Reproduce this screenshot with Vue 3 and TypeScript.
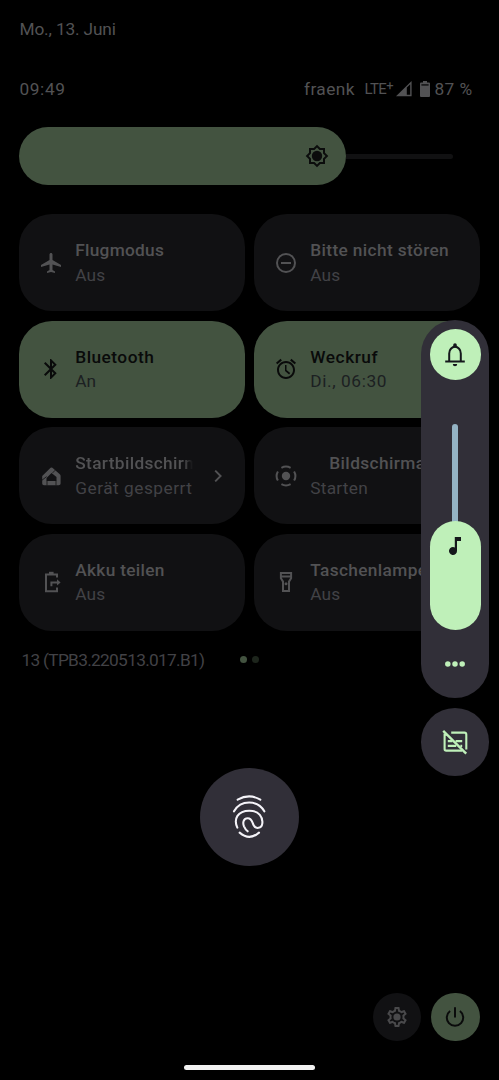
<script setup lang="ts">
interface Tile {
  icon: string
  title: string
  state: string
  active?: boolean
  chevron?: boolean
  indent?: boolean
  titleSpacing: number
  stateSpacing: number
}

const tiles: Tile[] = [
  { icon: 'plane', title: 'Flugmodus', state: 'Aus', titleSpacing: 0.27, stateSpacing: 0.1 },
  { icon: 'dnd', title: 'Bitte nicht stören', state: 'Aus', titleSpacing: 0.37, stateSpacing: 0.1 },
  { icon: 'bluetooth', title: 'Bluetooth', state: 'An', active: true, titleSpacing: 0.47, stateSpacing: 0 },
  { icon: 'alarm', title: 'Weckruf', state: 'Di., 06:30', active: true, titleSpacing: 0.55, stateSpacing: 0.6 },
  { icon: 'home', title: 'Startbildschirm', state: 'Gerät gesperrt', chevron: true, titleSpacing: 0.35, stateSpacing: 0.5 },
  { icon: 'record', title: 'Bildschirmaufn.', state: 'Starten', indent: true, titleSpacing: 0.4, stateSpacing: 0.25 },
  { icon: 'battery', title: 'Akku teilen', state: 'Aus', titleSpacing: 0.3, stateSpacing: 0.1 },
  { icon: 'torch', title: 'Taschenlampe', state: 'Aus', titleSpacing: 0.35, stateSpacing: 0.1 },
]
</script>

<template>
  <main class="screen">
    <div class="date"><span>Mo., 13. Juni</span></div>
    <header class="status">
      <span class="clock">09:49</span>
      <span class="carrier">fraenk</span>
      <span class="lte">LTE<sup>+</sup></span>
      <svg class="signal" viewBox="0 0 16 16"><path fill-rule="evenodd" d="M0 15.2 15.6 0V15.2ZM10.8 6.5V13.8H14.2V3.2Z" /></svg>
      <svg class="cell" viewBox="0 0 10 16"><path d="M3 0H7V1.6H9Q10 1.6 10 2.6V15Q10 16 9 16H1Q0 16 0 15V2.6Q0 1.6 1 1.6H3Z" /><path class="cell-gap" d="M1.4 3H8.6V4.8H1.4Z" /></svg>
      <span class="percent">87 %</span>
    </header>

    <div class="brightness">
      <div class="level">
        <svg class="icon" viewBox="0 0 24 24">
          <path fill-rule="evenodd" d="M20 8.69V4h-4.69L12 .69 8.69 4H4v4.69L.69 12 4 15.31V20h4.69L12 23.31 15.31 20H20v-4.69L23.31 12 20 8.69zM18 14.48V18h-3.52L12 20.48 9.52 18H6v-3.52L3.52 12 6 9.52V6h3.52L12 3.52 14.48 6H18v3.52L20.48 12 18 14.48z" />
          <circle cx="12" cy="12" r="5.2" />
        </svg>
      </div>
      <div class="rail"></div>
    </div>

    <section class="tiles">
      <article v-for="tile in tiles" :key="tile.title" class="tile" :class="{ active: tile.active }">
        <svg class="icon" viewBox="0 0 24 24">
          <path v-if="tile.icon === 'plane'" d="M22 16v-2l-8.5-5V3.5c0-.83-.67-1.5-1.5-1.5s-1.5.67-1.5 1.5V9L2 14v2l8.5-2.5V19L8 20.5V22l4-1 4 1v-1.5L13.5 19v-5.5L22 16z" />
          <path v-else-if="tile.icon === 'dnd'" d="M12 2a10 10 0 1 0 0 20 10 10 0 0 0 0-20zm0 18a8 8 0 1 1 0-16 8 8 0 0 1 0 16zM7 11h10v2H7z" />
          <path v-else-if="tile.icon === 'bluetooth'" d="M17.71 7.71L12 2h-1v7.59L6.41 5 5 6.41 10.59 12 5 17.59 6.41 19 11 14.41V22h1l5.71-5.71-4.3-4.29 4.3-4.29zM13 5.83l1.88 1.88L13 9.59V5.83zm1.88 10.46L13 18.17v-3.76l1.88 1.88z" />
          <path v-else-if="tile.icon === 'alarm'" d="M22 5.72l-4.6-3.86-1.29 1.53 4.6 3.86L22 5.72zM7.88 3.39L6.6 1.86 2 5.71l1.29 1.53 4.59-3.85zM12.5 8H11v6l4.1 3.4 1.1-1.4-3.7-3V8zM12 4c-4.97 0-9 4.03-9 9s4.02 9 9 9c4.97 0 9-4.03 9-9s-4.03-9-9-9zm0 16c-3.87 0-7-3.13-7-7s3.13-7 7-7 7 3.13 7 7-3.13 7-7 7z" />
          <g v-else-if="tile.icon === 'home'">
            <path fill-rule="evenodd" d="M3.2 12 11.6 3.8Q12.5 3 13.4 3.8L20.8 10.2Q21.6 10.9 21.6 12V19.4Q21.6 21.2 19.8 21.2H5Q3.2 21.2 3.2 19.4ZM12.5 9.1 7.5 14V17.1H17.5V13.1Z" />
            <path class="slit" d="M3 16.2 7.6 12.6M13.6 8.9 16.2 6.2M8 16.8V21.4M17 16.8V21.4" />
          </g>
          <g v-else-if="tile.icon === 'record'">
            <circle cx="12" cy="12" r="4.2" />
            <path class="line" d="M7.4 3.9A9.2 9.2 0 0 1 16.6 3.9M20.1 7.4A9.2 9.2 0 0 1 20.1 16.6M16.6 20.1A9.2 9.2 0 0 1 7.4 20.1M3.9 16.6A9.2 9.2 0 0 1 3.9 7.4" />
          </g>
          <g v-else-if="tile.icon === 'battery'">
            <path d="M10 1.8H14.6V4H10Z" />
            <path class="line" d="M18 7.6V4.4H7V21.2H18V17.4M12.4 16.2V12.4H19" />
            <path d="M18 9.2 21.6 12.4 18 15.6Z" />
          </g>
          <g v-else>
            <path class="line" d="M6.9 3H17.1V8.2L15 11.6V21H9V11.6L6.9 8.2ZM7 6.6H17" />
            <circle cx="12" cy="13.8" r="1.5" />
          </g>
        </svg>
        <div class="copy">
          <div class="title" :class="{ fade: tile.chevron, indent: tile.indent }" :style="{ letterSpacing: tile.titleSpacing + 'px' }">{{ tile.title }}</div>
          <div class="state" :style="{ letterSpacing: tile.stateSpacing + 'px' }">{{ tile.state }}</div>
        </div>
        <svg v-if="tile.chevron" class="chevron" viewBox="0 0 8 12"><path d="M1.2 .6 6.6 6 1.2 11.4" /></svg>
      </article>
    </section>

    <div class="build">
      <span class="version">13 (TPB3.220513.017.B1)</span>
      <i class="dot on"></i><i class="dot"></i>
    </div>

    <div class="finger">
      <svg viewBox="125 102 110 140">
        <path d="M145 122Q180 102 213 122M134 157C154 122 205 122 225 157M144 206C132 180 145 155 180 155C210 155 221 176 219 193C217 209 199 211 193 199C188 189 188 178 175 178C163 178 159 190 164 202Q168 211 175 217M151 221Q180 246 209 221" />
      </svg>
    </div>

    <footer class="actions">
      <button class="round settings" aria-label="Einstellungen">
        <svg class="icon" viewBox="0 0 24 24">
          <path d="M19.43 12.98c.04-.32.07-.64.07-.98 0-.34-.03-.66-.07-.98l2.11-1.65c.19-.15.24-.42.12-.64l-2-3.46c-.09-.16-.26-.25-.44-.25-.06 0-.12.01-.17.03l-2.49 1c-.52-.4-1.08-.73-1.69-.98l-.38-2.65C14.46 2.18 14.25 2 14 2h-4c-.25 0-.46.18-.49.42l-.38 2.65c-.61.25-1.17.59-1.69.98l-2.49-1c-.06-.02-.12-.03-.18-.03-.17 0-.34.09-.43.25l-2 3.46c-.13.22-.07.49.12.64l2.11 1.65c-.04.32-.07.65-.07.98 0 .33.03.66.07.98l-2.11 1.65c-.19.15-.24.42-.12.64l2 3.46c.09.16.26.25.44.25.06 0 .12-.01.17-.03l2.49-1c.52.4 1.08.73 1.69.98l.38 2.65c.03.24.24.42.49.42h4c.25 0 .46-.18.49-.42l.38-2.65c.61-.25 1.17-.59 1.69-.98l2.49 1c.06.02.12.03.18.03.17 0 .34-.09.43-.25l2-3.46c.12-.22.07-.49-.12-.64l-2.11-1.65zm-1.98-1.71c.04.31.05.52.05.73 0 .21-.02.43-.05.73l-.14 1.13.89.7 1.08.84-.7 1.21-1.27-.51-1.04-.42-.9.68c-.43.32-.84.56-1.25.73l-1.06.43-.16 1.13-.2 1.35h-1.4l-.19-1.35-.16-1.13-1.06-.43c-.43-.18-.83-.41-1.23-.71l-.91-.7-1.06.43-1.27.51-.7-1.21 1.08-.84.89-.7-.14-1.13c-.03-.31-.05-.54-.05-.74s.02-.43.05-.73l.14-1.13-.89-.7-1.08-.84.7-1.21 1.27.51 1.04.42.9-.68c.43-.32.84-.56 1.25-.73l1.06-.43.16-1.13.2-1.35h1.39l.19 1.35.16 1.13 1.06.43c.43.18.83.41 1.23.71l.91.7 1.06-.43 1.27-.51.7 1.21-1.07.85-.89.7.14 1.13z" />
          <circle cx="12" cy="12" r="3.6" />
        </svg>
      </button>
      <button class="round power" aria-label="Ein/Aus">
        <svg class="icon" viewBox="0 0 24 24"><path class="line" d="M12 2.2V12.6M7.1 6A8.2 8.2 0 1 0 16.9 6" /></svg>
      </button>
    </footer>

    <div class="homebar"></div>

    <aside class="volume">
      <div class="panel">
        <div class="bell">
          <svg viewBox="0 0 24 24">
            <path class="line" d="M6.2 18.4V10.4A5.8 6.6 0 0 1 17.8 10.4V18.4M2.2 18.6H21.8" />
            <path d="M10.2 4.4V2A1.8 1.8 0 0 1 13.8 2V4.4ZM9.8 21H14.2A2.2 2.2 0 0 1 9.8 21Z" />
          </svg>
        </div>
        <div class="track"></div>
        <div class="thumb">
          <svg viewBox="0 0 12 18"><path d="M5.8 0H12V4H8V14A4 4 0 1 1 5.8 10.4Z" /></svg>
        </div>
        <svg class="more" viewBox="0 0 20 6"><circle cx="2.8" cy="3" r="2.75" /><circle cx="10" cy="3" r="2.75" /><circle cx="17.2" cy="3" r="2.75" /></svg>
      </div>
      <div class="caption">
        <svg viewBox="0 0 26 26">
          <path d="M9.2 3.6H22.4Q24.3 3.6 24.3 5.5V20.5M4.9 5.8 2.6 5.6V20Q2.6 21.6 4.2 21.6H20M13.6 12.1H20.2M5.8 12.1H10.4M5.8 16.9H14.2M18.4 16.9H20.2" />
          <path class="slash" d="M1.2 1.8 24.2 24.6" />
        </svg>
      </div>
    </aside>
  </main>
</template>

<style>
html,
body {
  margin: 0;
  background: #000;
}
</style>

<style scoped>
.screen {
  position: relative;
  box-sizing: border-box;
  width: 499px;
  height: 1080px;
  overflow: hidden;
  background: #000;
  color: #525254;
  font: 400 17.3px/24px Roboto, "Noto Sans", sans-serif;
  white-space: nowrap;
}
svg {
  display: block;
  flex: none;
  fill: currentColor;
}
.icon {
  width: 24px;
  height: 24px;
}
.line {
  fill: none;
  stroke: currentColor;
  stroke-width: 2;
}
.date {
  padding: 17px 0 0 19.5px;
  letter-spacing: -0.16px;
}
.status {
  display: flex;
  align-items: center;
  height: 24px;
  margin: 36px 27px 0 19.5px;
}
.clock {
  letter-spacing: 0.6px;
}
.carrier {
  margin-left: auto;
  width: 60.5px;
  letter-spacing: 0.4px;
}
.lte {
  width: 31.5px;
  font-size: 15px;
  letter-spacing: -0.6px;
}
.lte sup {
  font-size: 13px;
  line-height: 0;
  vertical-align: 4px;
}
.signal {
  width: 16px;
  height: 16px;
  margin-right: 8px;
}
.cell {
  width: 10px;
  height: 16px;
}
.cell-gap {
  fill: #1c1c1d;
}
.percent {
  width: 37.5px;
  margin-left: 4.5px;
  letter-spacing: 0.4px;
}
.brightness {
  display: flex;
  align-items: center;
  height: 58px;
  margin: 26px 46px 0 19.4px;
}
.level {
  display: flex;
  align-items: center;
  justify-content: flex-end;
  box-sizing: border-box;
  width: 327px;
  height: 58px;
  padding-right: 17.4px;
  border-radius: 29px;
  background: #435340;
  color: #0b0c0c;
}
.rail {
  flex: 1;
  height: 5px;
  border-radius: 0 3px 3px 0;
  background: #111112;
}
.tiles {
  display: grid;
  grid-template-columns: 225.2px 225.2px;
  grid-auto-rows: 97px;
  gap: 9.6px 9.8px;
  margin: 29px 0 0 19.4px;
}
.tile {
  display: flex;
  align-items: center;
  box-sizing: border-box;
  padding-left: 19.2px;
  border-radius: 33px;
  background: #111113;
}
.tile.active {
  background: #435340;
  color: #090a0a;
}
.slit {
  fill: none;
  stroke: #111113;
  stroke-width: 0.8;
}
.copy {
  width: 118px;
  margin-left: 12.7px;
}
.title {
  font-weight: 500;
  line-height: 24.5px;
}
.title.fade {
  overflow: hidden;
  -webkit-mask-image: linear-gradient(90deg, #000 92%, transparent);
  mask-image: linear-gradient(90deg, #000 92%, transparent);
}
.title.indent {
  padding-left: 19px;
}
.state {
  line-height: 24.5px;
  color: #424246;
}
.active .state {
  color: #1c2022;
}
.chevron {
  width: 8px;
  height: 12px;
  margin-left: 20.4px;
}
.chevron path {
  fill: none;
  stroke: currentColor;
  stroke-width: 1.9;
}
.build {
  display: flex;
  align-items: center;
  height: 24px;
  margin: 17px 0 0 21.4px;
  color: #424246;
}
.version {
  width: 218.8px;
  letter-spacing: -0.69px;
}
.dot {
  width: 7px;
  height: 7px;
  margin-right: 5px;
  border-radius: 50%;
  background: #1d251c;
}
.dot.on {
  background: #435340;
}
.finger {
  display: flex;
  align-items: center;
  justify-content: center;
  width: 98.4px;
  height: 98px;
  margin: 96px 0 0 200.3px;
  border-radius: 50%;
  background: #312f38;
}
.finger svg {
  width: 36.67px;
  height: 46.67px;
}
.finger path {
  fill: none;
  stroke: #f4f3f8;
  stroke-width: 6.2;
  stroke-linecap: round;
}
.actions {
  display: flex;
  justify-content: flex-end;
  gap: 10px;
  margin: 127px 19.5px 0 0;
}
.round {
  display: flex;
  align-items: center;
  justify-content: center;
  width: 48.4px;
  height: 48.4px;
  padding: 0;
  border: 0;
  border-radius: 50%;
  background: #111113;
  color: #49494b;
}
.power {
  background: #435340;
  color: #0a0b0b;
}
.homebar {
  width: 131px;
  height: 5px;
  margin: 23.6px auto 0;
  border-radius: 3px;
  background: #f2f2f2;
}
.volume {
  position: absolute;
  top: 320px;
  left: 421px;
  width: 68.4px;
}
.panel {
  display: flex;
  flex-direction: column;
  align-items: center;
  box-sizing: border-box;
  height: 377.5px;
  padding-top: 9px;
  border-radius: 34.25px;
  background: #312f38;
}
.bell {
  display: flex;
  align-items: center;
  justify-content: center;
  width: 51.4px;
  height: 51px;
  border-radius: 50%;
  background: #bff0b9;
  color: #15181c;
}
.bell svg {
  width: 24px;
  height: 24px;
}
.track {
  width: 5.5px;
  height: 100px;
  margin-top: 43.5px;
  border-radius: 3px 3px 0 0;
  background: #94b3c4;
}
.thumb {
  box-sizing: border-box;
  width: 51.4px;
  height: 109.3px;
  margin-top: -3px;
  padding: 16.4px 0 0 19.5px;
  border-radius: 25.7px;
  background: #bff0b9;
  color: #15181c;
}
.thumb svg {
  width: 12px;
  height: 18px;
}
.more {
  width: 20px;
  height: 6px;
  margin-top: 31px;
  color: #bff0b9;
}
.caption {
  display: flex;
  align-items: center;
  justify-content: center;
  height: 68px;
  margin-top: 10px;
  border-radius: 50%;
  background: #312f38;
}
.caption svg {
  width: 26px;
  height: 26px;
}
.caption path {
  fill: none;
  stroke: #bff0b9;
  stroke-width: 2.1;
}
.caption .slash {
  stroke-width: 2.4;
}
</style>
